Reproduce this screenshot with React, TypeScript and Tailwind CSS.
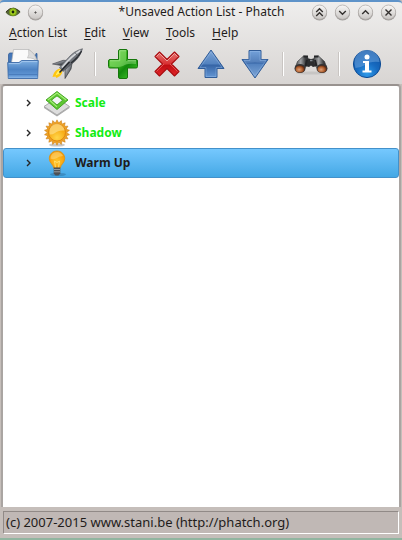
import React from "react";

const Defs = () => (
  <svg className="absolute h-0 w-0" aria-hidden="true">
    <defs>
      <linearGradient id="blue" x1="0" y1="0" x2="0" y2="1">
        <stop offset="0" stopColor="#7fb0e2" />
        <stop offset="0.5" stopColor="#4d83c4" />
        <stop offset="1" stopColor="#6ba0dc" />
      </linearGradient>
      <linearGradient id="arrow" x1="0" y1="0" x2="0" y2="1">
        <stop offset="0" stopColor="#7fa6d6" />
        <stop offset="0.5" stopColor="#5382bf" />
        <stop offset="0.55" stopColor="#3665a6" />
        <stop offset="1" stopColor="#6496d4" />
      </linearGradient>
      <linearGradient id="green" x1="0" y1="0" x2="1" y2="1">
        <stop offset="0" stopColor="#63d13c" />
        <stop offset="0.45" stopColor="#35ae1c" />
        <stop offset="0.6" stopColor="#128a0c" />
        <stop offset="1" stopColor="#4fd936" />
      </linearGradient>
      <linearGradient id="red" x1="0" y1="0" x2="0" y2="1">
        <stop offset="0" stopColor="#e67672" />
        <stop offset="0.5" stopColor="#d83032" />
        <stop offset="0.55" stopColor="#c00d12" />
        <stop offset="1" stopColor="#e2262a" />
      </linearGradient>
      <linearGradient id="metal" x1="0" y1="0" x2="1" y2="1">
        <stop offset="0.2" stopColor="#b4b7bc" />
        <stop offset="0.5" stopColor="#74787f" />
        <stop offset="0.75" stopColor="#33363c" />
      </linearGradient>
      <linearGradient id="barrel" x1="0" y1="0" x2="1" y2="0">
        <stop offset="0" stopColor="#4a4b4d" />
        <stop offset="0.4" stopColor="#a2a4a6" />
        <stop offset="0.75" stopColor="#3f4042" />
        <stop offset="1" stopColor="#2a2b2c" />
      </linearGradient>
      <radialGradient id="info" cx="0.5" cy="0.85" r="0.8">
        <stop offset="0" stopColor="#2f9be9" />
        <stop offset="0.5" stopColor="#176ac0" />
        <stop offset="1" stopColor="#1053a4" />
      </radialGradient>
      <radialGradient id="sun" cx="0.5" cy="0.8" r="0.8">
        <stop offset="0" stopColor="#ffd64a" />
        <stop offset="0.6" stopColor="#f8ae18" />
        <stop offset="1" stopColor="#f6a51b" />
      </radialGradient>
      <radialGradient id="bulb" cx="0.5" cy="0.6" r="0.7">
        <stop offset="0" stopColor="#ffc72c" />
        <stop offset="0.6" stopColor="#faa50e" />
        <stop offset="1" stopColor="#ec8f06" />
      </radialGradient>
      <radialGradient id="lens" cx="0.4" cy="0.6" r="0.6">
        <stop offset="0" stopColor="#e0a27a" />
        <stop offset="0.6" stopColor="#b0602f" />
        <stop offset="1" stopColor="#63290f" />
      </radialGradient>
      <linearGradient id="knob" x1="0" y1="0" x2="0" y2="1">
        <stop offset="0" stopColor="#f8f7f6" />
        <stop offset="1" stopColor="#c9c6c3" />
      </linearGradient>
    </defs>
  </svg>
);

const Knob = ({ label, children }: { label: string; children: React.ReactNode }) => (
  <button type="button" aria-label={label} className="block h-[17px] w-[17px] shrink-0">
    <svg viewBox="0 0 17 17" className="h-full w-full" fill="none">
      <circle cx="8.5" cy="9" r="7.5" fill="#86827f" opacity="0.75" />
      <circle cx="8.5" cy="8.2" r="7.2" fill="url(#knob)" stroke="#aaa6a3" strokeWidth="0.7" />
      <g stroke="#33302e" strokeWidth="1.4">{children}</g>
    </svg>
  </button>
);

const Eye = () => (
  <svg viewBox="0 0 16 10" className="h-[10px] w-4">
    <path d="M.5 5.2Q4.5 .6 8.5 .9 12.5 1 15.5 5 12.5 9.1 8 9.3 3.5 9.2 .5 5.2Z" fill="#56653a" />
    <path d="M1 4.8Q5 .5 9 1.1L15 4.7" fill="none" stroke="#39351f" strokeWidth="1" />
    <circle cx="8" cy="5" r="3.9" fill="#78a018" />
    <circle cx="8" cy="5" r="2.8" fill="#a8d61f" />
    <circle cx="8" cy="5" r="1.4" fill="#17220a" />
  </svg>
);

const Folder = () => (
  <svg viewBox="0 0 32 32" className="h-8 w-8" strokeLinejoin="round">
    <path d="M1.5 14V6.500L2.500 5H6V14Z" fill="#4477b9" stroke="#365f99" strokeWidth="0.8" />
    <path d="M29 5.500H30V14H27Z" fill="#4477b9" stroke="#365f99" strokeWidth="0.8" />
    <path d="M4.5 15 6.500 1.500H21.500Q28 5 30 13V15Z" fill="#fafafa" stroke="#b4b4b4" strokeWidth="0.7" />
    <path d="M21.500 1.500Q22.500 7 20.500 10 27 9.500 30 13.500 28 5 21.500 1.500Z" fill="#dcdcdc" stroke="#aaa" strokeWidth="0.5" />
    <path d="M.7 14.5H12L14.5 12.5H31.3L30.6 30.5H1.3Z" fill="url(#blue)" stroke="#3d6ca9" strokeWidth="0.9" />
    <path d="M1.8 15.600H12.5L15 13.600H30.2" fill="none" stroke="#a8cbef" strokeWidth="0.9" />
    <path d="M1.5 26.500H30.5" stroke="#4577b8" strokeWidth="0.8" />
    <path d="M1.5 29.2H30.5" stroke="#8bb6e6" strokeWidth="1" />
  </svg>
);

const Rocket = () => (
  <svg viewBox="0 0 32 32" className="h-8 w-8" strokeLinejoin="round">
    <path d="M8.500 20.500Q4 22 2.500 26L1.500 29 4.500 28.500 5.500 30 9 28Q11 26 11.500 23.500Z" fill="#ffc60e" />
    <path d="M9 21.500Q5.500 23.500 4.500 27.500 8 26.500 10.500 23Z" fill="#fff06a" />
    <path d="M17 12.500 12 12.300 1.500 16 10 17.500 13 17Z" fill="url(#metal)" stroke="#3a3d43" strokeWidth="0.6" />
    <path d="M21 15.500 20 21 14 30.500 14 23 15.500 19Z" fill="url(#metal)" stroke="#2a2d32" strokeWidth="0.6" />
    <path d="M31.500 .7Q23 3 17.500 9.500L8.500 19.500 12 23.500 22 15Q29 9.500 31.500 .7Z" fill="url(#metal)" stroke="#54585e" strokeWidth="0.6" />
    <path d="M29.500 2.500Q21 7.500 11 19.500" stroke="#d6d8db" strokeWidth="1.500" fill="none" />
    <path d="M30.500 3Q27 10 20 15" stroke="#2c2f34" strokeWidth="1.400" fill="none" />
    <path d="M18.500 14 8.500 24.500" stroke="#25282d" strokeWidth="1.600" />
    <path d="M24 4.500 27.500 9" stroke="#55595f" strokeWidth="0.8" />
  </svg>
);

const Plus = () => (
  <svg viewBox="0 0 32 32" className="h-8 w-8" strokeLinejoin="round">
    <path d="M13 1.5H19Q20.5 1.5 20.5 3V11.500H29Q30.5 11.500 30.5 13V18.5Q30.5 20 29 20H20.5V29Q20.5 30.5 19 30.5H13Q11.5 30.5 11.5 29V20H3Q1.5 20 1.5 18.5V13Q1.500 11.500 3 11.500H11.5V3Q11.5 1.5 13 1.5Z" fill="url(#green)" stroke="#16760b" />
    <path d="M12.8 13V3H19V13H29V16Q20 15 16 18 12 20 3 18.5V13Z" fill="#b2ef98" opacity="0.4" />
    <path d="M12.7 12.700V2.7H19.2M3 12.700H12.7M20.5 12.700H29" fill="none" stroke="#aeea98" strokeWidth="0.8" />
  </svg>
);

const Cross = () => (
  <svg viewBox="0 0 32 32" className="h-8 w-8" strokeLinejoin="round">
    <path d="M8.5 4 16 11.5 23.5 4 28 8.5 20.5 16 28 23.5 23.5 28 16 20.5 8.5 28 4 23.5 11.5 16 4 8.5Z" fill="url(#red)" stroke="#a90d10" strokeWidth="1.1" />
    <path d="M5.5 8.5 8.5 5.5 16 13 23.5 5.5 26.5 8.5" fill="none" stroke="#f5b3af" strokeWidth="0.8" />
    <path d="M5.5 23.5 13 16M19 16 26.5 23.5" stroke="#f06b68" strokeWidth="0.7" />
  </svg>
);

const Arrow = ({ down = false }: { down?: boolean }) => (
  <svg viewBox="0 0 32 32" className="h-8 w-8" strokeLinejoin="round">
    <g transform={down ? "matrix(1 0 0 -1 0 32)" : undefined}>
      <path d="M16 2 29 20.5H22V29.5H10V20.5H3Z" fill="url(#arrow)" stroke="#305c98" />
      <path d="M16 4 27 19.5H21V28.5H11V19.5H5Z" fill="none" stroke="#a5c7ef" strokeWidth="0.6" opacity="0.6" />
    </g>
    {down && <path d="M10.5 3H21.5V11.5H28L25 15Q16 14 7 15L4 11.5H10.5Z" fill="#a8c9ee" opacity="0.25" />}
  </svg>
);

const Binoculars = () => (
  <svg viewBox="0 0 34 32" className="h-8 w-[34px]" strokeLinejoin="round">
    <ellipse cx="17" cy="25" rx="15" ry="1.6" fill="#999" opacity="0.3" />
    <path d="M12 10 17 11 22 10 23 18 19 19 17 17.500 15 19 11 18Z" fill="#2b2c2e" />
    <path d="M9.500 8 13.500 8.500 14.500 13 11.500 19.500 1.500 19 3.500 13.500Z" fill="url(#barrel)" stroke="#2f3032" strokeWidth="0.6" />
    <path d="M24.500 8 20.500 8.500 19.500 13 22.500 19.500 32.500 19 30.500 13.500Z" fill="url(#barrel)" stroke="#2f3032" strokeWidth="0.6" />
    <path d="M9.500 8.500H14M20 8.500H24.500" stroke="#252628" strokeWidth="1.800" />
    <path d="M13 12 11.500 18M21 12 22.500 18" stroke="#222325" strokeWidth="2" />
    <path d="M16 12.500H18.500" stroke="#858b90" strokeWidth="1.500" />
    <ellipse cx="6" cy="20.500" rx="5.500" ry="4.500" fill="#343435" />
    <ellipse cx="28" cy="20.500" rx="5.500" ry="4.500" fill="#343435" />
    <ellipse cx="6" cy="21" rx="4.500" ry="3.600" fill="url(#lens)" />
    <ellipse cx="28" cy="21" rx="4.500" ry="3.600" fill="url(#lens)" />
  </svg>
);

const Info = () => (
  <svg viewBox="0 0 32 32" className="h-8 w-8">
    <circle cx="16" cy="16" r="13.6" fill="url(#info)" stroke="#0f4c94" />
    <path d="M3.5 15A12.5 12.5 0 0 1 28.5 14Q19 13 14 17 9 20 4.5 20Z" fill="#8bbcec" opacity="0.4" />
    <circle cx="16" cy="9" r="2.5" fill="#fff" />
    <path d="M12 13H18V22.5H20.5V24.5H11.5V22.5H14V15H12Z" fill="#fff" />
  </svg>
);

const ScaleIcon = () => (
  <svg viewBox="0 0 28 28" className="h-7 w-7" strokeLinejoin="round">
    <path d="M14 9 26.5 17.5 14 26 1 17.5Z" fill="#ddd" stroke="#aaa" />
    <path d="M1 17.5 14 26 26.5 17.5V19L14 27.5 1 19Z" fill="#aaa" />
    <path fillRule="evenodd" d="M14 2.5 25 11 14 20.5 3 11ZM14 7 8.5 11.2 14 16 19.5 11.2Z" fill="#5dc632" stroke="#389d17" strokeWidth="0.9" />
    <path d="M4.8 11 14 4 23.2 11M14 17.8 7 11.5" fill="none" stroke="#a6ed78" strokeWidth="1.1" />
    <path d="M14 7.500 18.800 11.200 14 15.300 9.200 11.200Z" fill="#f2f4f6" />
  </svg>
);

const SunIcon = () => (
  <svg viewBox="0 0 28 28" className="h-7 w-7">
    <ellipse cx="14" cy="26" rx="8" ry="1.6" fill="#777" opacity="0.4" />
    <g fill="#eea326" stroke="#c77a15" strokeWidth="0.5">
      {Array.from({ length: 18 }, (_, i) => (
        <path key={i} d="M14 .8 16.2 5H11.8Z" transform={`rotate(${i * 20} 14 13.5)`} />
      ))}
    </g>
    <circle cx="14" cy="13.5" r="10" fill="#eda226" />
    <circle cx="14" cy="13.5" r="8.5" fill="url(#sun)" stroke="#d87e0d" strokeWidth="0.8" />
    <path d="M6.5 13A7.5 7.5 0 0 1 21.5 11.5Q15 11 12 14 9 16 6.7 15.5Z" fill="#ffe69a" opacity="0.6" />
  </svg>
);

const BulbIcon = () => (
  <svg viewBox="0 0 28 28" className="h-7 w-7">
    <ellipse cx="15" cy="25.5" rx="8" ry="1.6" fill="#27608c" opacity="0.4" />
    <path d="M14 2C9.2 2 6.3 5.5 6.3 9.5 6.3 14 10.5 15.5 10.700 19H17.3C17.5 15.500 21.7 14 21.7 9.5 21.7 5.5 18.8 2 14 2Z" fill="url(#bulb)" stroke="#df920d" strokeWidth="0.8" />
    <path d="M7.5 9.500Q8 3.2 14 3 18 3 20 7 16 7 13 9.500 10 11 7.5 9.500Z" fill="#ffe08a" opacity="0.5" />
    <path d="M12.5 18.500 11.500 12 14 13.500 16.500 12 15.5 18.500" fill="none" stroke="#ffe680" strokeWidth="0.8" />
    <path d="M10.7 18.500H17.3V24.5L15.5 26.5H12.5L10.7 24.5Z" fill="#4d5156" />
    <path d="M11 20.500H17M11 22.800H17" stroke="#a9aeb2" strokeWidth="0.8" />
  </svg>
);

const Tool = ({ label, children }: { label: string; children: React.ReactNode }) => (
  <button type="button" aria-label={label} className="flex h-10 w-11 shrink-0 items-center justify-center">
    {children}
  </button>
);

const Separator = () => (
  <div className="flex h-10 w-3 shrink-0 items-center justify-center">
    <div className="h-6 w-0.5 border-l border-r border-l-[#c9c5c2] border-r-white" />
  </div>
);

const menus = ["Action List", "Edit", "View", "Tools", "Help"];

const actions = [
  { name: "Scale", icon: <ScaleIcon />, selected: false },
  { name: "Shadow", icon: <SunIcon />, selected: false },
  { name: "Warm Up", icon: <BulbIcon />, selected: true },
];

export default function App() {
  return (
    <div className="flex min-h-screen flex-col border-b-2 border-[#91b5a0] bg-[#c5beba] font-['Noto_Sans',sans-serif] text-xs text-[#1f1c1b]">
      <Defs />
      <div className="rounded-t border-t-2 border-[#5e93c9] bg-linear-to-b from-[#efeeed] to-[#d8d5d3]">
        <header className="flex h-5 items-center px-[5px]">
          <Eye />
          <div className="ml-1.5 flex">
            <Knob label="Window options"><circle cx="8.5" cy="8.5" r="0.6" strokeWidth="1" /></Knob>
          </div>
          <h1 className="flex-1 pl-12 text-center whitespace-nowrap">*Unsaved Action List - Phatch</h1>
          <div className="flex gap-1.5">
            <Knob label="Keep above"><path d="M5.2 8 8.5 4.8 11.8 8M5.2 12 8.5 8.8 11.8 12" /></Knob>
            <Knob label="Minimize"><path d="M5.2 7 8.5 10.2 11.8 7" /></Knob>
            <Knob label="Maximize"><path d="M5.2 10 8.5 6.8 11.8 10" /></Knob>
            <Knob label="Close"><path d="M5.5 5.5 11.5 11.5M11.5 5.5 5.5 11.5" /></Knob>
          </div>
        </header>
        <nav className="flex h-[22px] items-center gap-[17px] px-[9px]">
          {menus.map((m) => (
            <button key={m} type="button" className="whitespace-nowrap">
              <span className="underline underline-offset-2">{m[0]}</span>{m.slice(1)}
            </button>
          ))}
        </nav>
        <div role="toolbar" aria-label="Actions" className="flex h-10 items-center px-px">
          <Tool label="Open"><Folder /></Tool>
          <Tool label="Execute"><Rocket /></Tool>
          <Separator />
          <Tool label="Add"><Plus /></Tool>
          <Tool label="Remove"><Cross /></Tool>
          <Tool label="Move up"><Arrow /></Tool>
          <Tool label="Move down"><Arrow down /></Tool>
          <Separator />
          <Tool label="Inspect"><Binoculars /></Tool>
          <Separator />
          <Tool label="About"><Info /></Tool>
        </div>
      </div>
      <main className="mx-px flex-1 rounded-t border-x-2 border-t-2 border-[#aaa5a2] border-t-[#98928f] bg-white pt-0.5">
        <ul>
          {actions.map((a) => (
            <li key={a.name}>
              <button
                type="button"
                className={`flex h-[30px] w-full items-center rounded-[3px] border pl-[21px] text-left font-bold ${
                  a.selected
                    ? "border-[#4391ca] bg-linear-to-b from-[#75c8fe] to-[#43a8e5]"
                    : "border-transparent text-[#12ec12]"
                }`}
              >
                <svg viewBox="0 0 8 8" className="h-2 w-2" fill="none" stroke="#252525" strokeWidth="1.4">
                  <path d="M2 1 5 4 2 7" />
                </svg>
                <span className="ml-2.5">{a.icon}</span>
                <span className="ml-1">{a.name}</span>
              </button>
            </li>
          ))}
        </ul>
      </main>
      <footer className="px-[3px] pt-1 pb-1">
        <div className="h-[23px] border border-t-[#918a87] border-r-white border-b-white border-l-[#918a87] bg-[#c0b8b5] pl-0.5 text-[13px] leading-[21px] whitespace-nowrap">
          (c) 2007-2015 www.stani.be (http://phatch.org)
        </div>
      </footer>
    </div>
  );
}
